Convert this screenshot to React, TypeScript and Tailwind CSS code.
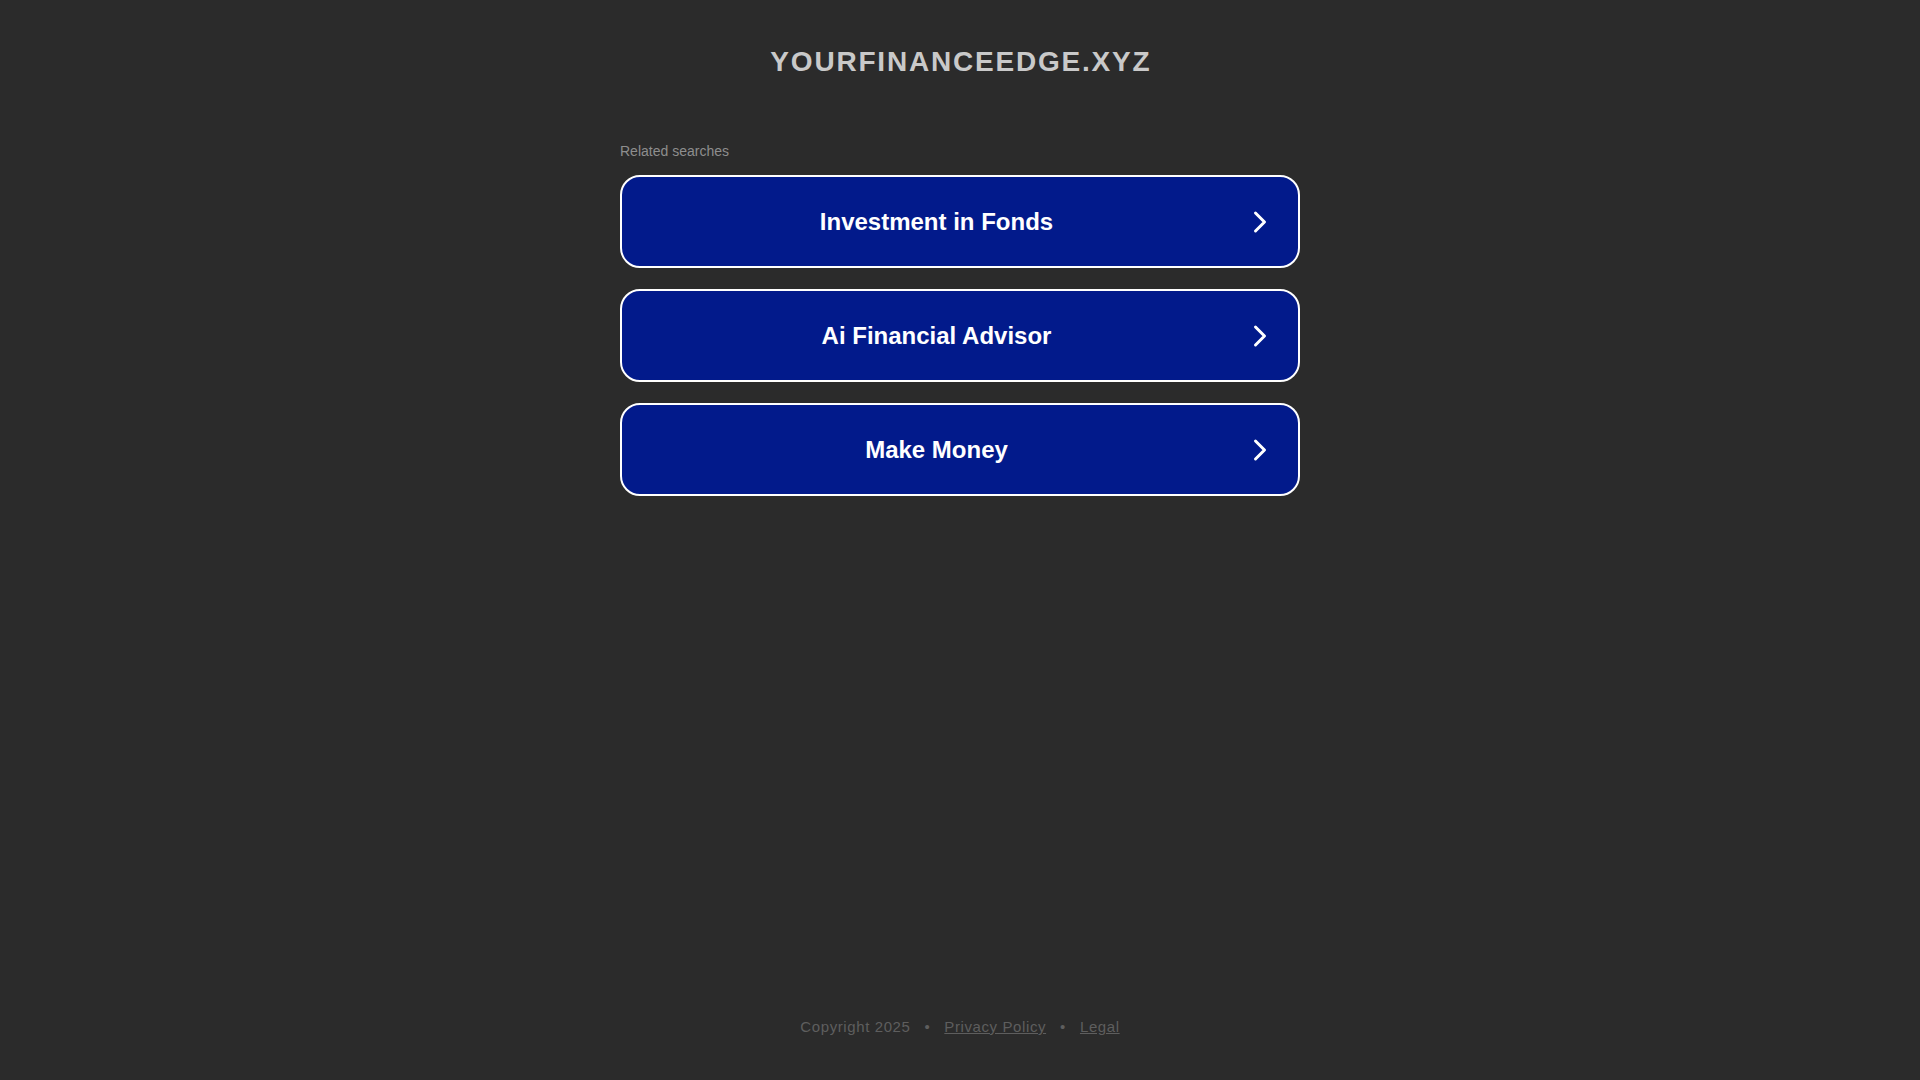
const searches = ['Investment in Fonds', 'Ai Financial Advisor', 'Make Money'];

const Chevron = () => (
  <svg className="w-[20px] h-[24px] shrink-0" viewBox="0 0 20 24" fill="none" stroke="currentColor">
    <path d="M4.5 3 L13.5 12 L4.5 21" strokeWidth="3" strokeLinecap="round" strokeLinejoin="round" />
  </svg>
);

const App = () => {
  return (
    <div className="h-screen bg-[#2b2b2b] flex flex-col items-center font-['Liberation_Sans',Arial,sans-serif]">
      {/* Domain title */}
      <h1 className="pt-[46px] text-[28px] leading-[32px] font-bold tracking-[1.8px] text-[#c9c9c9] pl-[1.8px]">
        YOURFINANCEEDGE.XYZ
      </h1>

      {/* Related searches */}
      <div className="w-[680px] mt-[65px]">
        <p className="text-[14px] leading-[16px] text-[#8e8e8e]">Related searches</p>
        <div className="mt-[16px] flex flex-col gap-[21px]">
          {searches.map((label) => (
            <a
              key={label}
              href="#"
              className="h-[93px] flex items-center bg-[#021a8b] border-2 border-white rounded-[20px] text-white pr-[27px]"
            >
              <span className="flex-1 text-center text-[24px] font-bold">{label}</span>
              <Chevron />
            </a>
          ))}
        </div>
      </div>

      {/* Footer */}
      <footer className="mt-auto pb-[45px] text-[15px] leading-[17px] tracking-[0.6px] text-[#5e5e5e] flex items-center">
        <span>Copyright 2025</span>
        <span className="mx-[14px]">•</span>
        <a href="#" className="underline">Privacy Policy</a>
        <span className="mx-[14px]">•</span>
        <a href="#" className="underline">Legal</a>
      </footer>
    </div>
  );
};

export default App;
